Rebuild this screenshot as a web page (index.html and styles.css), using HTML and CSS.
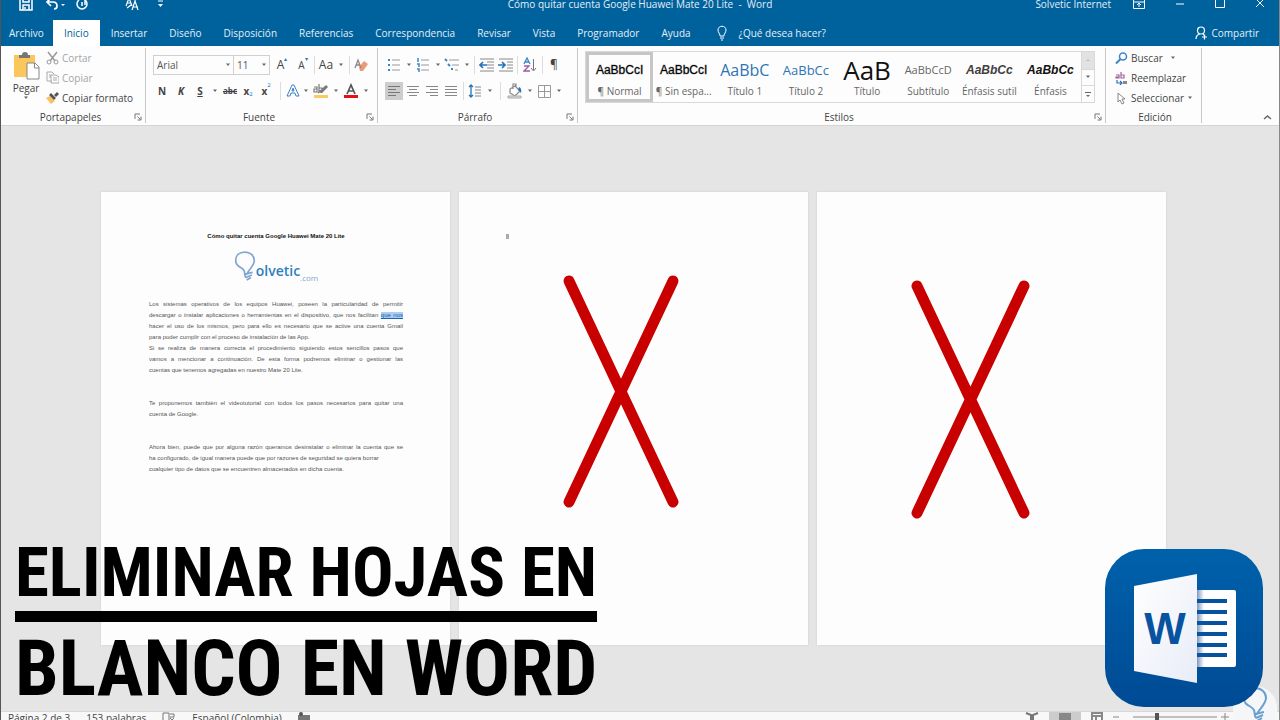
FILE: index.html
```html
<!DOCTYPE html>
<html lang="es">
<head>
<meta charset="utf-8">
<title>Cómo quitar cuenta Google Huawei Mate 20 Lite - Word</title>
<link rel="stylesheet" href="styles.css">
</head>
<body>
<svg class="defs" aria-hidden="true">
  <symbol id="caret" viewBox="0 0 6 4"><path d="M1 .5h4L3 3z" fill="#666"/></symbol>
  <symbol id="launch" viewBox="0 0 8 8"><path d="M1 6V1h5M3.500 3.500l3 3M7 3.500V7H3.500" fill="none" stroke="#777"/></symbol>
  <symbol id="bulb" viewBox="0 0 26 36"><path d="M15 28c-1-3 9-10 9-17C24 5 19 1 13 1 6 1 2 5 2 11c0 8 7 7 10 12 1 3 0 5 2 8M13 27l9-2M14 31l7-3M15 34l5-3" fill="none" stroke="currentColor" stroke-width="2"/></symbol>
</svg>
<div class="app">
  <header class="titlebar">
    <div class="quick">
      <button aria-label="Guardar"><svg width="14" height="14" viewBox="0 0 14 14"><path d="M1 1h12v12H1zM4 1v4h6V1M4 13V8h6v5M6 10v2" fill="none" stroke="#fff" stroke-width="1.500"/></svg></button>
      <button class="undo" aria-label="Deshacer"><svg width="20" height="14" viewBox="0 0 20 14"><path d="M6 1L2 5l4 4M2 5h6q4 0 4 4 0 3-3 3" fill="none" stroke="#fff" stroke-width="1.700"/><path d="M16 7h4l-2 2z" fill="#fff"/></svg></button>
      <button class="redo" aria-label="Rehacer"><svg width="14" height="14" viewBox="0 0 14 14"><path d="M4 3a5 5 0 1 0 6 0M10 8V1H5M7 5v4" fill="none" stroke="#fff" stroke-width="1.500"/></svg></button>
      <button class="abc" aria-label="Formato de texto"><svg width="14" height="14" viewBox="0 0 14 14"><path d="M1 9l3-8 3 8M2 6h4M7 13l3-9 3 9M8 10h5M2 11l4-3M7 2l4 1" fill="none" stroke="#fff" stroke-width="1.200"/></svg></button>
      <button class="more" aria-label="Personalizar"><svg width="8" height="8" viewBox="0 0 8 8"><path d="M2 1h5" stroke="#fff"/><path d="M2 4h5L4.500 7z" fill="#fff"/></svg></button>
    </div>
    <h1>Cómo quitar cuenta Google Huawei Mate 20 Lite &nbsp;-&nbsp; Word</h1>
    <div class="account">
      <span>Solvetic Internet</span>
      <button aria-label="Opciones de cinta"><svg width="12" height="10" viewBox="0 0 12 10"><path d="M.5.5h11v9H.5zM1 3h10M6 8V4M4 6l2-2 2 2" fill="none" stroke="#fff"/></svg></button>
      <button aria-label="Minimizar"><svg width="10" height="10" viewBox="0 0 10 10"><path d="M1 5h8" stroke="#fff"/></svg></button>
      <button aria-label="Maximizar"><svg width="10" height="10" viewBox="0 0 10 10"><path d="M.5.5h9v8h-9z" fill="none" stroke="#fff"/></svg></button>
      <button aria-label="Cerrar"><svg width="10" height="10" viewBox="0 0 10 10"><path d="M1 0l8 8M9 0L1 8" stroke="#fff"/></svg></button>
    </div>
  </header>
  <nav class="tabs">
    <button>Archivo</button><button class="active">Inicio</button><button>Insertar</button><button>Diseño</button><button>Disposición</button><button>Referencias</button><button>Correspondencia</button><button>Revisar</button><button>Vista</button><button>Programador</button><button>Ayuda</button>
    <button class="tell"><svg width="10" height="16" viewBox="0 0 10 16"><path d="M3 11c0-3-2-3-2-6 0-5 8-5 8 0 0 3-2 3-2 6zM3 13h4M4 15h2" fill="none" stroke="#fff"/></svg>¿Qué desea hacer?</button>
    <button class="share"><svg width="13" height="14" viewBox="0 0 13 14"><circle cx="6" cy="4.500" r="3.500" fill="none" stroke="#fff" stroke-width="1.200"/><path d="M1 13c0-3 2-5 4-5M8 8l2 2M7 11h5M9.500 8.500v5" fill="none" stroke="#fff" stroke-width="1.200"/></svg>Compartir</button>
  </nav>

  <section class="ribbon">
    <div class="group clipboard">
      <div class="body">
        <button class="paste"><svg width="26" height="28" viewBox="0 0 26 28"><path d="M0 3h21v22H0z" fill="#fbc65b"/><path d="M5 6V3h3q0-3 3-3t3 3h2v3z" fill="#777"/><path d="M13 11h8l4 4v12H13z" fill="#fff" stroke="#888"/><path d="M20.500 11v5H25" fill="none" stroke="#888"/></svg><span>Pegar</span><svg width="6" height="4"><use href="#caret"/></svg></button>
        <div class="list">
          <button class="off"><svg width="13" height="14" viewBox="0 0 13 14"><path d="M2 1l7 9M11 1L4 10" stroke="#999" stroke-width="1.500"/><circle cx="3" cy="11" r="2" fill="none" stroke="#999"/><circle cx="10" cy="11" r="2" fill="none" stroke="#999"/></svg>Cortar</button>
          <button class="off"><svg width="13" height="14" viewBox="0 0 13 14"><path d="M6 10H1V1h5l2 2M5 4h5l3 2v6H5zM7 7h4M7 9h4M3 4h2M3 6h2" fill="none" stroke="#aaa"/></svg>Copiar</button>
          <button><svg width="13" height="14" viewBox="0 0 13 14"><path d="M0 7l4-2 5 5-4 3z" fill="#f7c262"/><path d="M3 4l2-2 5 5-2 2zM8 4l3-3 2 2-3 3z" fill="#555"/></svg>Copiar formato</button>
        </div>
      </div>
      <footer><span>Portapapeles</span><button aria-label="Más opciones de portapapeles"><svg width="8" height="8"><use href="#launch"/></svg></button></footer>
    </div>

    <div class="group font">
      <div class="body rows">
        <div class="row">
          <label class="combo family"><select aria-label="Fuente"><option>Arial</option></select><svg width="6" height="4"><use href="#caret"/></svg></label>
          <label class="combo size"><select aria-label="Tamaño de fuente"><option>11</option></select><svg width="6" height="4"><use href="#caret"/></svg></label>
          <button class="w24 big">A<sup>▴</sup></button><button class="w18">A<sup>▾</sup></button><i class="sep"></i>
          <button class="w18 big">Aa</button><button class="w12" aria-label="Cambiar mayúsculas"><svg width="6" height="4"><use href="#caret"/></svg></button><i class="sep"></i>
          <button class="w18" aria-label="Borrar formato"><svg width="14" height="14" viewBox="0 0 14 14"><path d="M5 9l5-6 4 3-5 7H6z" fill="#ec9a75"/><path d="M1 10l3-8 3 8M2 7h4" fill="none" stroke="#888" stroke-width="1.300"/></svg></button>
        </div>
        <div class="row">
          <button class="w18"><b>N</b></button><button class="w20"><b><em>K</em></b></button><button class="w18"><b><u>S</u></b></button><button class="w12" aria-label="Subrayado"><svg width="6" height="4"><use href="#caret"/></svg></button>
          <button class="w18 small"><s>abc</s></button><button class="w18"><b>x</b><sub>2</sub></button><button class="w18"><b>x</b><sup>2</sup></button><i class="sep wide"></i>
          <button class="w14" aria-label="Efectos"><svg width="14" height="14" viewBox="0 0 14 14"><path d="M1 12L6 1h2l5 11h-3L9 9H5l-1 3zM6 7h2L7 4z" fill="#fff" stroke="#3f83c4"/></svg></button><button class="w12" aria-label="Más efectos"><svg width="6" height="4"><use href="#caret"/></svg></button>
          <button class="w18" aria-label="Resaltado"><svg width="16" height="16" viewBox="0 0 16 16"><path d="M1 12h14v3H1z" fill="#f8cc63"/><path d="M1 4h3v5H1V6h3M6 1v8h3V5H6M5 10l8-7" fill="none" stroke="#777" stroke-width="1.200"/><path d="M7 10l6-8 2 2-6 6z" fill="#777"/></svg></button><button class="w12" aria-label="Más colores de resaltado"><svg width="6" height="4"><use href="#caret"/></svg></button>
          <button class="w18" aria-label="Color de fuente"><svg width="16" height="16" viewBox="0 0 16 16"><path d="M1 12h14v3H1z" fill="#e60f16"/><path d="M4 11l4-9 4 9M5 8h6" fill="none" stroke="#555" stroke-width="1.700"/></svg></button><button class="w12" aria-label="Más colores de fuente"><svg width="6" height="4"><use href="#caret"/></svg></button>
        </div>
      </div>
      <footer><span>Fuente</span><button aria-label="Más opciones de fuente"><svg width="8" height="8"><use href="#launch"/></svg></button></footer>
    </div>

    <div class="group paragraph">
      <div class="body rows">
        <div class="row">
          <button class="w18" aria-label="Viñetas"><svg width="14" height="14" viewBox="0 0 14 14"><path d="M1 2h2M1 7h2M1 12h2" stroke="#3d86c6" stroke-width="2"/><path d="M5 2h8M5 7h8M5 12h8" stroke="#999"/></svg></button><button class="w11" aria-label="Más viñetas"><svg width="6" height="4"><use href="#caret"/></svg></button>
          <button class="w18" aria-label="Numeración"><svg width="14" height="14" viewBox="0 0 14 14"><path d="M2 0v4M1 6h2v3M1 11h2v3" fill="none" stroke="#3d86c6" stroke-width="1.500"/><path d="M5 2h8M5 7h8M5 12h8" stroke="#999"/></svg></button><button class="w11" aria-label="Más numeración"><svg width="6" height="4"><use href="#caret"/></svg></button>
          <button class="w18" aria-label="Lista multinivel"><svg width="16" height="14" viewBox="0 0 16 14"><path d="M1 1l2 2M4 6l2 2M7 11h2" stroke="#3d86c6" stroke-width="2"/><path d="M5 2h10M8 7h7M11 12h3" stroke="#999"/></svg></button><button class="w11" aria-label="Más niveles"><svg width="6" height="4"><use href="#caret"/></svg></button><i class="sep"></i>
          <button class="w18" aria-label="Disminuir sangría"><svg width="15" height="14" viewBox="0 0 15 14"><path d="M1 1h14M8 4h7M8 7h7M8 10h7M1 13h14" stroke="#888"/><path d="M8 7H2M4 4L1 7l3 3" fill="none" stroke="#2374ba" stroke-width="1.700"/></svg></button>
          <button class="w20" aria-label="Aumentar sangría"><svg width="15" height="14" viewBox="0 0 15 14"><path d="M1 1h14M9 4h6M9 7h6M9 10h6M1 13h14" stroke="#888"/><path d="M0 7h6M4 4l3 3-3 3" fill="none" stroke="#2374ba" stroke-width="1.700"/></svg></button><i class="sep"></i>
          <button class="w20" aria-label="Ordenar"><svg width="14" height="16" viewBox="0 0 14 16"><path d="M1 7l3-6 3 6M2 5h4" fill="none" stroke="#3d86c6" stroke-width="1.300"/><path d="M1 9h5l-5 5h6" fill="none" stroke="#9b5ca0" stroke-width="1.300"/><path d="M10.500 2v11M8 11l2.500 3 2.500-3" fill="none" stroke="#777"/></svg></button><i class="sep"></i>
          <button class="w18 big">¶</button>
        </div>
        <div class="row">
          <button class="w18 on" aria-label="Alinear a la izquierda"><svg width="14" height="12" viewBox="0 0 14 12"><path d="M1 1.500h12M1 4.500h8M1 7.500h12M1 10.500h8" stroke="#777"/></svg></button>
          <button class="w20" aria-label="Centrar"><svg width="14" height="12" viewBox="0 0 14 12"><path d="M1 1.500h12M3 4.500h8M1 7.500h12M3 10.500h8" stroke="#888"/></svg></button>
          <button class="w18" aria-label="Alinear a la derecha"><svg width="14" height="12" viewBox="0 0 14 12"><path d="M1 1.500h12M5 4.500h8M1 7.500h12M5 10.500h8" stroke="#888"/></svg></button>
          <button class="w20" aria-label="Justificar"><svg width="14" height="12" viewBox="0 0 14 12"><path d="M1 1.500h12M1 4.500h12M1 7.500h12M1 10.500h12" stroke="#888"/></svg></button><i class="sep"></i>
          <button class="w18" aria-label="Interlineado"><svg width="14" height="14" viewBox="0 0 14 14"><path d="M3 1v12M1 3l2-2 2 2M1 11l2 2 2-2" fill="none" stroke="#2374ba" stroke-width="1.300"/><path d="M7 3h6M7 6h6M7 9h6M7 12h6" stroke="#888"/></svg></button><button class="w11" aria-label="Más interlineado"><svg width="6" height="4"><use href="#caret"/></svg></button><i class="sep wide"></i>
          <button class="w18" aria-label="Sombreado"><svg width="16" height="16" viewBox="0 0 16 16"><path d="M3 6l5-3 5 5-5 5-5-3zM6 6V1h3v4" fill="none" stroke="#888" stroke-width="1.200"/><path d="M12 4q3 1 2 6l-3-3z" fill="#2374ba"/><path d="M1 13h13v2H1z" fill="#ddd" stroke="#aaa"/></svg></button><button class="w11" aria-label="Más sombreado"><svg width="6" height="4"><use href="#caret"/></svg></button>
          <button class="w18" aria-label="Bordes"><svg width="13" height="13" viewBox="0 0 13 13"><path d="M.5.5h12v12H.5zM6.500 1v11M1 6.500h11" fill="none" stroke="#999"/></svg></button><button class="w11" aria-label="Más bordes"><svg width="6" height="4"><use href="#caret"/></svg></button>
        </div>
      </div>
      <footer><span>Párrafo</span><button aria-label="Más opciones de párrafo"><svg width="8" height="8"><use href="#launch"/></svg></button></footer>
    </div>

    <div class="group styles">
      <div class="body gallery">
        <button class="chosen"><span class="sample dark">AaBbCcI</span><span>¶ Normal</span></button>
        <button><span class="sample dark">AaBbCcI</span><span>¶ Sin espa...</span></button>
        <button><span class="sample title1">AaBbC</span><span>Título 1</span></button>
        <button><span class="sample title2">AaBbCc</span><span>Título 2</span></button>
        <button><span class="sample title">AaB</span><span>Título</span></button>
        <button><span class="sample sub">AaBbCcD</span><span>Subtítulo</span></button>
        <button><span class="sample soft">AaBbCc</span><span>Énfasis sutil</span></button>
        <button><span class="sample emph">AaBbCc</span><span>Énfasis</span></button>
        <div class="scroll">
          <button class="dim" aria-label="Subir"><svg width="6" height="4" viewBox="0 0 6 4"><path d="M1 3h4L3 1z" fill="#bbb"/></svg></button>
          <button aria-label="Bajar"><svg width="6" height="4"><use href="#caret"/></svg></button>
          <button aria-label="Más estilos"><svg width="8" height="7" viewBox="0 0 8 7"><path d="M1 1.500h6" stroke="#666"/><path d="M2 4h4L4 6z" fill="#666"/></svg></button>
        </div>
      </div>
      <footer><span>Estilos</span><button aria-label="Más opciones de estilos"><svg width="8" height="8"><use href="#launch"/></svg></button></footer>
    </div>

    <div class="group edit">
      <div class="body list">
        <button><svg width="13" height="13" viewBox="0 0 13 13"><circle cx="8" cy="4.500" r="3.500" fill="none" stroke="#3d86c6" stroke-width="1.500"/><path d="M5.500 7L1 11.500" stroke="#3d86c6" stroke-width="2"/></svg>Buscar <svg class="drop" width="6" height="4"><use href="#caret"/></svg></button>
        <button><svg width="13" height="13" viewBox="0 0 13 13"><path d="M1 3h3v3H1V5h3M6 0v6h3V3H6" fill="none" stroke="#a0619f" stroke-width="1.200"/><path d="M2 8v3h4M5 9l2 2-2 2" fill="none" stroke="#2374ba" stroke-width="1.200"/><path d="M8 9h4v3H8z" fill="#888"/></svg>Reemplazar</button>
        <button><svg width="13" height="13" viewBox="0 0 13 13"><path d="M3 1v9l2-2 2 4 2-1-2-4h3z" fill="#fff" stroke="#888"/></svg>Seleccionar<svg width="6" height="4"><use href="#caret"/></svg></button>
      </div>
      <footer><span>Edición</span></footer>
    </div>
    <button class="collapse" aria-label="Contraer cinta"><svg width="9" height="6" viewBox="0 0 9 6"><path d="M1 5l3.500-3L8 5" fill="none" stroke="#666" stroke-width="1.500"/></svg></button>
  </section>

  <main class="canvas">
    <article class="page doc">
      <h2>Cómo quitar cuenta Google Huawei Mate 20 Lite</h2>
      <div class="brand"><svg width="22" height="31"><use href="#bulb"/></svg><b>olvetic</b><span>.com</span></div>
      <p><span>Los sistemas operativos de los equipos Huawei, poseen la particularidad de permitir</span>
      <span>descargar o instalar aplicaciones o herramientas en el dispositivo, que nos facilitan <mark>que nos</mark></span>
      <span>hacer el uso de los mismos, pero para ello es necesario que se active una cuenta Gmail</span>
      <span class="end">para poder cumplir con el proceso de instalación de las App.</span>
      <span>Si se realiza de manera correcta el procedimiento siguiendo estos sencillos pasos que</span>
      <span>vamos a mencionar a continuación. De esta forma podremos eliminar o gestionar las</span>
      <span class="end">cuentas que tenemos agregadas en nuestro Mate 20 Lite.</span></p>
      <p><span>Te proponemos también el videotutorial con todos los pasos necesarios para quitar una</span>
      <span class="end">cuenta de Google.</span></p>
      <p><span>Ahora bien, puede que por alguna razón queramos desinstalar o eliminar la cuenta que se</span>
      <span class="end">ha configurado, de igual manera puede que por razones de seguridad se quiera borrar</span>
      <span class="end">cualquier tipo de datos que se encuentren almacenados en dicha cuenta.</span></p>
    </article>
    <article class="page"><svg viewBox="0 0 349 453" role="img" aria-label="Hoja en blanco tachada"><path d="M47 42h3v5h-3z" fill="#aaa"/><path d="M110 89l104 221M214 89L110 310" class="cross"/></svg></article>
    <article class="page"><svg viewBox="0 0 349 453" role="img" aria-label="Hoja en blanco tachada"><path d="M100 94l107 227M207 94L100 321" class="cross"/></svg></article>
  </main>

  <footer class="status">
    <span>Página 2 de 3</span><span>153 palabras</span>
    <svg width="14" height="12" viewBox="0 0 14 12"><path d="M1 1h6v9H1zM8 2h4v3H8M8 6l4 4M12 6L8 10" fill="none" stroke="#777"/></svg>
    <span>Español (Colombia)</span>
    <svg width="12" height="10" viewBox="0 0 12 10"><path d="M0 3h12v6H0z" fill="#777"/><circle cx="3" cy="2" r="2" fill="#555"/></svg>
    <div class="views">
      <svg width="14" height="10" viewBox="0 0 14 10"><path d="M1 1l5 2v7M13 1L8 3v7" fill="none" stroke="#777" stroke-width="2"/></svg>
      <span class="current"><svg width="12" height="10" viewBox="0 0 12 10"><path d="M0 1h12v9H0z" fill="#888"/></svg></span>
      <svg width="12" height="10" viewBox="0 0 12 10"><path d="M1 1h10v8H1zM2 4h8M5 4v5" fill="none" stroke="#888" stroke-width="2"/></svg>
      <svg class="slider" width="120" height="10" viewBox="0 0 120 10"><path d="M0 5h6M20 5h84M108 5h8M112 1v8" stroke="#888"/><path d="M42 1h4v8h-4z" fill="#555"/></svg>
      <span>50%</span>
    </div>
  </footer>
</div>

<div class="headline"><span class="upper">ELIMINAR HOJAS EN</span><span class="lower">BLANCO EN WORD</span></div>
<div class="watermark"><svg width="26" height="36"><use href="#bulb"/></svg></div>
<svg class="word" viewBox="0 0 158 158" role="img" aria-label="Word">
  <defs>
    <linearGradient id="blue" x2="0" y2="1"><stop stop-color="#0061ab"/><stop offset="1" stop-color="#004a94"/></linearGradient>
    <linearGradient id="shade"><stop stop-color="#7f98bd"/><stop offset="1" stop-color="#fff"/></linearGradient>
    <linearGradient id="door" x2="1" y2="1"><stop stop-color="#fff"/><stop offset="1" stop-color="#e8ecf7"/></linearGradient>
  </defs>
  <rect width="158" height="158" rx="39" fill="url(#blue)"/>
  <path d="M92 41h37q2 0 2 2v73q0 2-2 2H92z" fill="#fff"/>
  <path d="M92 41h7v77h-7z" fill="url(#shade)"/>
  <path d="M92 52h30M92 63h30M92 74h30M92 85h30M92 96h30M92 106h30" stroke="#0753a0" stroke-width="4"/>
  <path d="M29 37l63-12v109l-63-12z" fill="url(#door)"/>
  <text x="60" y="95" text-anchor="middle">W</text>
</svg>
</body>
</html>
```

FILE: styles.css
```css
* { box-sizing: border-box; }
body {
  margin: 0;
  position: relative;
  min-height: 100vh;
  overflow: hidden;
  font: 10px/14px "Open Sans", "Noto Sans", sans-serif;
  color: #444;
}
button {
  display: flex;
  align-items: center;
  justify-content: center;
  border: 0;
  padding: 0;
  background: none;
  font: inherit;
  color: inherit;
  white-space: nowrap;
}
svg { display: block; flex: none; }
.defs { position: absolute; width: 0; height: 0; }

.app {
  min-height: 100vh;
  display: flex;
  flex-direction: column;
  background: #e5e5e5;
  border-left: 1px solid #555;
  border-right: 1px solid #888;
}

.titlebar {
  display: grid;
  grid-template-columns: 1fr auto 1fr;
  grid-template-rows: 8px;
  height: 20px;
  align-items: center;
  background: #00629c;
  color: #e4eef6;
}
.titlebar h1 { margin: 0; font-size: 10px; font-weight: 400; line-height: 14px; }
.quick { display: flex; align-items: center; padding-left: 18px; }
.undo { margin-left: 12px; }
.redo { margin-left: 10px; }
.abc { margin-left: 36px; }
.more { margin-left: 17px; }
.account { display: flex; align-items: center; justify-content: flex-end; gap: 30px; padding-right: 14px; }
.account span { margin-right: -8px; }

.tabs {
  display: flex;
  height: 26px;
  padding-right: 20px;
  background: #00629c;
  color: #e4eef6;
}
.tabs button { padding: 0 11px; }
.tabs button:first-child { padding: 0 9px 0 8px; }
.tabs .active { padding: 0 11px; background: #fff; color: #00629c; }
.tabs .tell { gap: 12px; padding-left: 15px; }
.tabs .share { gap: 3px; margin-left: auto; padding: 0; }

.ribbon {
  display: flex;
  height: 80px;
  padding: 2px 0;
  background: #fdfdfd;
  border-bottom: 1px solid #d4d4d4;
}
.group {
  flex: none;
  display: flex;
  flex-direction: column;
  justify-content: space-between;
  border-right: 1px solid #c8c8c8;
}
.group footer { display: flex; align-items: center; height: 12px; padding: 0 3px 0 6px; }
.group footer span { flex: 1; text-align: center; }
.body { display: flex; }
.clipboard { width: 145px; }
.clipboard .body { padding-left: 11px; }
.paste { flex-direction: column; justify-content: flex-start; padding-top: 4px; gap: 1px; }
.paste svg:first-child { margin-left: 2px; }
.list { display: flex; flex-direction: column; align-items: flex-start; }
.list button { height: 20px; gap: 3px; }
.clipboard .list { padding-left: 6px; }
.off { color: #a5a5a5; }
.font { width: 232px; }
.paragraph { width: 200px; }
.rows { flex-direction: column; gap: 6px; padding: 7px 0 0 7px; }
.row { display: flex; align-items: center; height: 20px; }
.w11 { width: 11px; }
.w12 { width: 12px; }
.w14 { width: 14px; }
.w18 { width: 18px; }
.w20 { width: 20px; }
.w24 { width: 24px; }
.row button { height: 18px; }
.big { font-size: 12px; }
.small { font-size: 8px; font-weight: 700; }
.on { background: #cdcdcd; }
sup, sub { font-size: 6px; line-height: 6px; color: #2374ba; }
sup { align-self: flex-start; }
sub { align-self: flex-end; padding-bottom: 3px; }
.sep { width: 1px; height: 18px; margin: 0 2px; background: #dcdcdc; }
.sep.wide { margin: 0 5px; }
.combo { display: flex; align-items: center; height: 20px; padding-right: 2px; border: 1px solid #d0d0d0; }
.combo + .combo { border-left: 0; }
.combo select { flex: 1; min-width: 0; appearance: none; border: 0; padding: 0 3px; background: none; font: inherit; color: #555; }
.family { width: 81px; }
.size { width: 36px; }

.styles { flex: 1; min-width: 0; }
.gallery { margin: 3px 10px 0 7px; height: 52px; border: 1px solid #d8d8d8; overflow: hidden; }
.gallery > button { flex: 1; min-width: 0; flex-direction: column; justify-content: flex-end; padding-bottom: 4px; overflow: hidden; color: #666; }
.gallery .sample { display: flex; align-items: center; height: 28px; line-height: 20px; }
.gallery .chosen { border: 3px solid #c6c6c6; padding-bottom: 1px; }
.dark { font: 12px "Liberation Sans", sans-serif; color: #000; -webkit-text-stroke: 1px rgba(0, 0, 0, .3); }
.sub { font-size: 11px; }
.title1 { font-size: 16px; color: #2e74b5; }
.title2 { font-size: 13px; color: #2e74b5; }
.title { font-size: 26px; color: #111; }
.soft, .emph { font: italic 700 12px "Liberation Sans", sans-serif; color: #404040; }
.emph { color: #111; }
.scroll { flex: none; width: 13px; display: grid; grid-template-rows: repeat(3, 1fr); border-left: 1px solid #d8d8d8; }
.scroll button + button { border-top: 1px solid #d8d8d8; }
.dim { background: #e2e2e2; }
.edit { width: 96px; margin-right: 61px; }
.edit .list { padding-left: 9px; }
.drop { margin-left: 4px; }
.collapse { margin-left: auto; padding-right: 7px; align-self: flex-end; height: 12px; }

.canvas {
  flex: 1;
  display: grid;
  grid-template-columns: repeat(3, 1fr);
  gap: 9px;
  align-items: start;
  padding: 66px 113px 66px 100px;
}
.page { aspect-ratio: 349 / 453; background: #fdfdfd; box-shadow: 0 0 2px #ccc; }
.page > svg { width: 100%; }
.cross { fill: none; stroke: #c80000; stroke-width: 11px; stroke-linecap: round; }
.doc { padding: 39px 47px 0 48px; font: 6px/11px "Liberation Sans", Arial, sans-serif; color: #555; }
.doc h2 { margin: 0; font-size: 6px; line-height: 11px; text-align: center; color: #111; }
.brand { display: flex; align-items: flex-end; justify-content: center; height: 45px; padding: 0 0 5px; color: #7fa6d2; }
.brand b { font: 600 14px/22px "Open Sans", sans-serif; color: #2f7fc0; }
.brand span { font: 8px/8px "Open Sans", sans-serif; }
.doc p { margin: 0 0 22px; }
.brand + p { margin-top: 12px; }
.doc p span { display: block; white-space: nowrap; text-align: justify; text-align-last: justify; }
.doc p .end { text-align-last: left; }
mark { background: #a9cdf3; color: #2261ad; text-decoration: underline; }

.status {
  display: flex;
  align-items: flex-start;
  gap: 16px;
  height: 9px;
  padding: 0 8px 0 7px;
  overflow: hidden;
  line-height: 12px;
  background: #f8f8f8;
  border-top: 1px solid #d8d8d8;
}
.views { display: flex; gap: 10px; margin-left: auto; }
.current { display: flex; justify-content: center; width: 32px; background: #ccc; }
.slider { margin: 0 8px 0 0; }

.headline {
  position: absolute;
  left: 15px;
  top: 535px;
  display: flex;
  flex-direction: column;
  font-family: "Roboto Condensed", "Liberation Sans Narrow", "DejaVu Sans Condensed", sans-serif;
  font-weight: 700;
  color: #000;
  white-space: nowrap;
}
.upper { font-size: 69px; line-height: 76px; border-bottom: 11px solid #000; }
.lower { font-size: 78px; line-height: 94px; }
.word { position: absolute; left: 1105px; top: 549px; width: 158px; }
.word text { font: 700 44px "Liberation Sans", sans-serif; fill: #0753a0; }
.watermark {
  position: absolute;
  right: 3px;
  top: 686px;
  width: 44px;
  height: 34px;
  overflow: hidden;
  padding: 1px 0 0 9px;
  border-radius: 22px 22px 0 0;
  background: #f4f6f8;
  color: #6a9fce;
}
```
